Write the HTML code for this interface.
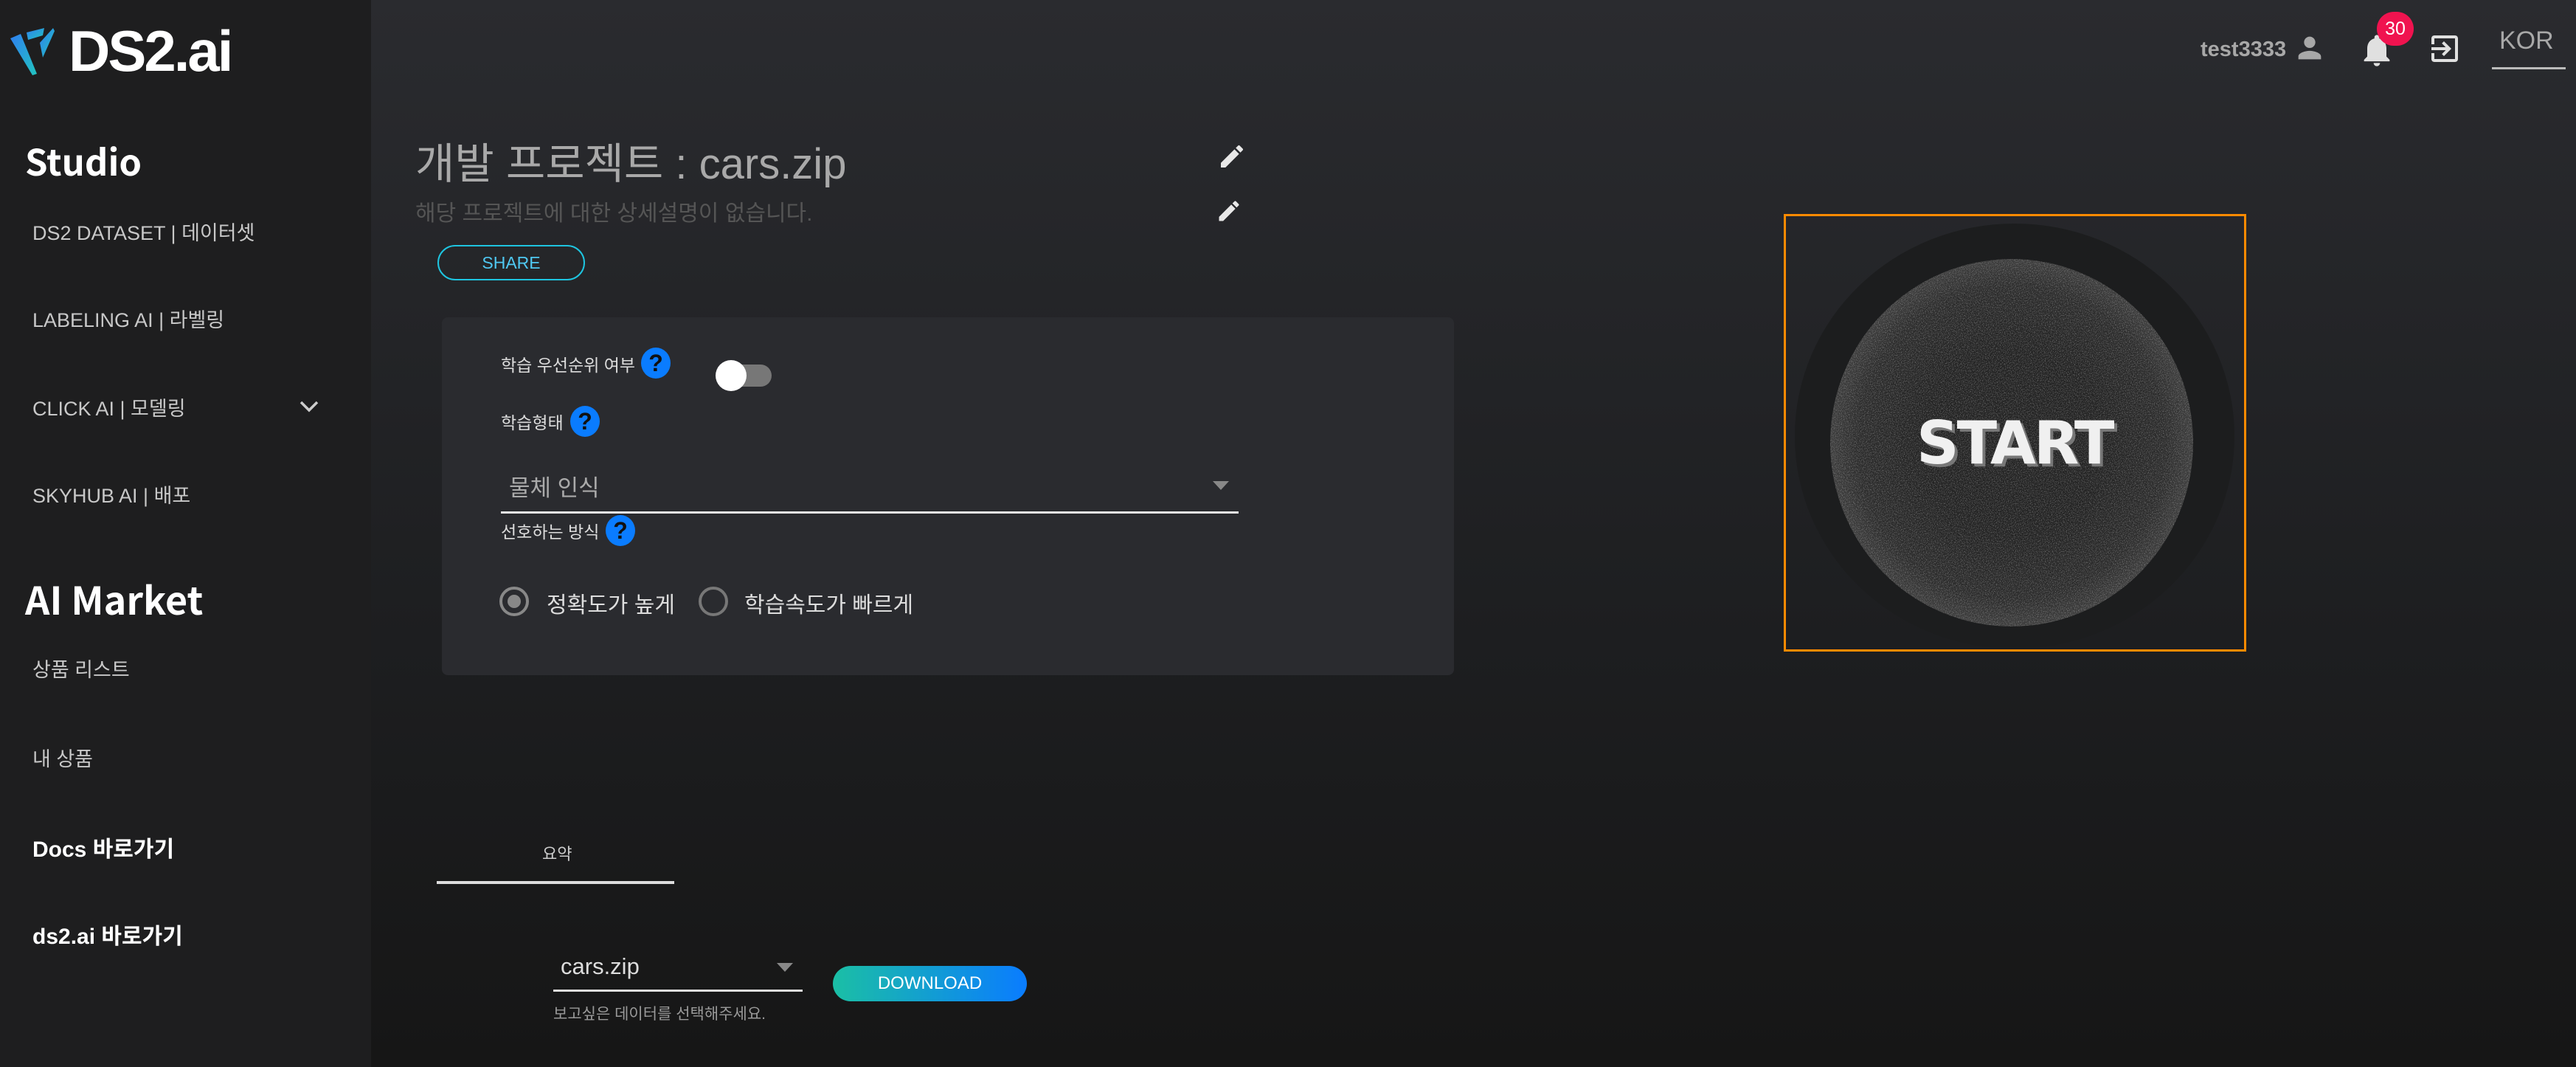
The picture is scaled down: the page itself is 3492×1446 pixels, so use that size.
<!DOCTYPE html>
<html><head><meta charset="utf-8">
<style>
*{margin:0;padding:0;box-sizing:border-box}
body{width:3492px;height:1446px;overflow:hidden;font-family:"Liberation Sans","Noto Sans CJK KR",sans-serif;background:linear-gradient(180deg,#2a2b2f 0%,#1d1e20 60%,#161616 100%);position:relative;color:#ddd}
.side{position:absolute;left:0;top:0;width:503px;height:1446px;background:#1e1e1f}
.a{position:absolute;white-space:nowrap}
.mi{font-size:27px;color:#c8c8c8;left:44px}
.hd{font-size:49px;font-weight:bold;color:#fff;left:34px;font-family:"Noto Sans CJK KR","Liberation Sans",sans-serif}
.help{position:absolute;width:40px;height:42px;border-radius:50%;background:#0a7cff;color:#111;font-weight:bold;font-size:32px;text-align:center;line-height:42px}
.lbl{font-size:23px;color:#ddd}
</style></head><body>
<div class="side"></div>
<svg class="a" style="left:14px;top:38px" width="62" height="64" viewBox="0 0 62 64">
<defs><linearGradient id="lg" x1="0" y1="0" x2="1" y2="1"><stop offset="0" stop-color="#2f7ff0"/><stop offset="1" stop-color="#22c4c0"/></linearGradient></defs>
<polygon points="0,14 14,8 36,62 30,64" fill="url(#lg)"/>
<polygon points="22,6 46,0 44,10 24,16" fill="url(#lg)"/>
<polygon points="40,20 58,0 60,4 44,40" fill="url(#lg)"/>
</svg>
<div class="a" style="left:93px;top:24px;font-size:78px;font-weight:bold;color:#fff;letter-spacing:-3px">DS2.ai</div>
<div class="a hd" style="top:182px">Studio</div>
<div class="a mi" style="top:294px">DS2 DATASET | 데이터셋</div>
<div class="a mi" style="top:412px">LABELING AI | 라벨링</div>
<div class="a mi" style="top:532px">CLICK AI | 모델링</div>
<svg class="a" style="left:406px;top:542px" width="26" height="18" viewBox="0 0 26 18"><path d="M2 3 L13 14 L24 3" stroke="#ccc" stroke-width="3.5" fill="none"/></svg>
<div class="a mi" style="top:650px">SKYHUB AI | 배포</div>
<div class="a hd" style="top:773px;font-size:52px">AI Market</div>
<div class="a mi" style="top:886px">상품 리스트</div>
<div class="a mi" style="top:1007px">내 상품</div>
<div class="a mi" style="top:1126px;color:#fff;font-weight:bold;font-size:30px">Docs 바로가기</div>
<div class="a mi" style="top:1244px;color:#fff;font-weight:bold;font-size:30px">ds2.ai 바로가기</div>

<!-- top right -->
<div class="a" style="left:2983px;top:51px;font-size:29px;font-weight:bold;color:#a8a8a8">test3333</div>
<svg class="a" style="left:3108px;top:42px" width="46" height="46" viewBox="0 0 24 24"><path fill="#a8a8a8" d="M12 12c2.2 0 4-1.8 4-4s-1.8-4-4-4-4 1.8-4 4 1.8 4 4 4zm0 2c-2.7 0-8 1.3-8 4v2h16v-2c0-2.7-5.3-4-8-4z"/></svg>
<svg class="a" style="left:3196px;top:42px" width="52" height="52" viewBox="0 0 24 24"><path fill="#e0e0e0" d="M12 22c1.1 0 2-.9 2-2h-4c0 1.1.9 2 2 2zm6-6v-5c0-3.1-1.6-5.6-4.5-6.3V4c0-.8-.7-1.5-1.5-1.5s-1.5.7-1.5 1.5v.7C7.6 5.4 6 7.9 6 11v5l-2 2v1h16v-1l-2-2z"/></svg>
<div class="a" style="left:3222px;top:16px;width:50px;height:46px;border-radius:23px;background:#f0134f;color:#fff;font-size:25px;text-align:center;line-height:46px">30</div>
<svg class="a" style="left:3290px;top:42px" width="48" height="48" viewBox="0 0 24 24"><path fill="#e0e0e0" d="M10.1 15.6 11.5 17l5-5-5-5-1.4 1.4 2.6 2.6H3v2h9.7l-2.6 2.6zM19 3H5c-1.1 0-2 .9-2 2v4h2V5h14v14H5v-4H3v4c0 1.1.9 2 2 2h14c1.1 0 2-.9 2-2V5c0-1.1-.9-2-2-2z"/></svg>
<div class="a" style="left:3388px;top:36px;font-size:34px;color:#a8a8a8">KOR</div>
<div class="a" style="left:3378px;top:91px;width:100px;height:3px;background:#bbb"></div>

<!-- title -->
<div class="a" style="left:563px;top:175px;font-size:58px;color:#a9a9a9">개발 프로젝트 : cars.zip</div>
<svg class="a" style="left:1650px;top:192px" width="40" height="40" viewBox="0 0 24 24"><path fill="#e8e8e8" d="M3 17.25V21h3.75L17.8 9.94l-3.75-3.75L3 17.25zM20.7 7.04a1 1 0 0 0 0-1.41l-2.34-2.34a1 1 0 0 0-1.41 0l-1.83 1.83 3.75 3.75 1.83-1.83z"/></svg>
<div class="a" style="left:563px;top:264px;font-size:30px;color:#555">해당 프로젝트에 대한 상세설명이 없습니다.</div>
<svg class="a" style="left:1648px;top:268px" width="36" height="36" viewBox="0 0 24 24"><path fill="#e8e8e8" d="M3 17.25V21h3.75L17.8 9.94l-3.75-3.75L3 17.25zM20.7 7.04a1 1 0 0 0 0-1.41l-2.34-2.34a1 1 0 0 0-1.41 0l-1.83 1.83 3.75 3.75 1.83-1.83z"/></svg>
<div class="a" style="left:593px;top:332px;width:200px;height:48px;border:2px solid #1ec5e0;border-radius:24px;color:#4fc8f2;font-size:23px;text-align:center;line-height:44px">SHARE</div>

<!-- card -->
<div class="a" style="left:599px;top:430px;width:1372px;height:485px;background:#2a2b2f;border-radius:8px"></div>
<div class="a lbl" style="left:679px;top:476px">학습 우선순위 여부</div>
<div class="help" style="left:869px;top:471px">?</div>
<div class="a" style="left:980px;top:494px;width:66px;height:30px;border-radius:15px;background:#777"></div>
<div class="a" style="left:970px;top:488px;width:42px;height:42px;border-radius:50%;background:#fff"></div>
<div class="a lbl" style="left:679px;top:554px">학습형태</div>
<div class="help" style="left:773px;top:550px">?</div>
<div class="a" style="left:690px;top:636px;font-size:31px;color:#aaa">물체 인식</div>
<div class="a" style="left:1644px;top:652px;width:0;height:0;border-left:11px solid transparent;border-right:11px solid transparent;border-top:12px solid #888"></div>
<div class="a" style="left:679px;top:693px;width:1000px;height:3px;background:#e8e8e8"></div>
<div class="a lbl" style="left:679px;top:702px">선호하는 방식</div>
<div class="help" style="left:821px;top:698px">?</div>
<div class="a" style="left:677px;top:795px;width:40px;height:40px;border-radius:50%;border:4px solid #888"></div>
<div class="a" style="left:688px;top:806px;width:18px;height:18px;border-radius:50%;background:#888"></div>
<div class="a" style="left:741px;top:795px;font-size:30px;color:#ddd">정확도가 높게</div>
<div class="a" style="left:947px;top:795px;width:40px;height:40px;border-radius:50%;border:4px solid #777"></div>
<div class="a" style="left:1009px;top:795px;font-size:30px;color:#ddd">학습속도가 빠르게</div>

<!-- tab -->
<div class="a" style="left:735px;top:1140px;font-size:22px;color:#ccc">요약</div>
<div class="a" style="left:592px;top:1194px;width:322px;height:4px;background:#ddd"></div>
<div class="a" style="left:760px;top:1292px;font-size:31px;color:#ddd">cars.zip</div>
<div class="a" style="left:1053px;top:1305px;width:0;height:0;border-left:11px solid transparent;border-right:11px solid transparent;border-top:12px solid #888"></div>
<div class="a" style="left:750px;top:1341px;width:338px;height:3px;background:#ddd"></div>
<div class="a" style="left:750px;top:1358px;font-size:21px;color:#999">보고싶은 데이터를 선택해주세요.</div>
<div class="a" style="left:1129px;top:1309px;width:263px;height:48px;border-radius:24px;background:linear-gradient(90deg,#1bbfa5,#0a7cff);color:#fff;font-size:24px;text-align:center;line-height:48px">DOWNLOAD</div>

<!-- start -->
<div class="a" style="left:2433px;top:303px;width:596px;height:576px;border-radius:50%;background:#1c1d1e"></div>
<div class="a" style="left:2418px;top:290px;width:627px;height:593px;border:3px solid #ff8a00"></div>
<svg class="a" style="left:2480px;top:350px" width="494" height="500" viewBox="0 0 494 500">
<defs>
<filter id="n"><feTurbulence type="fractalNoise" baseFrequency="0.8" numOctaves="2" seed="3"/><feColorMatrix values="0 0 0 0 0.7 0 0 0 0 0.7 0 0 0 0 0.7 0 0 0 2.2 -1"/><feComposite in2="SourceGraphic" operator="in"/></filter>
<radialGradient id="rg"><stop offset="0.5" stop-color="#222"/><stop offset="0.85" stop-color="#2b2b2b"/><stop offset="1" stop-color="#3c3c3c"/></radialGradient>
</defs>
<ellipse cx="247" cy="250" rx="246" ry="249" fill="url(#rg)"/>
<ellipse cx="247" cy="250" rx="246" ry="249" fill="#fff" filter="url(#n)" opacity="0.5"/>
</svg>
<div class="a" style="left:2598px;top:554px;font-size:80px;font-weight:bold;color:#f0f0f0;text-shadow:4px 4px 0 #777;font-family:'DejaVu Sans','Liberation Sans',sans-serif;letter-spacing:-3px">START</div>
</body></html>
